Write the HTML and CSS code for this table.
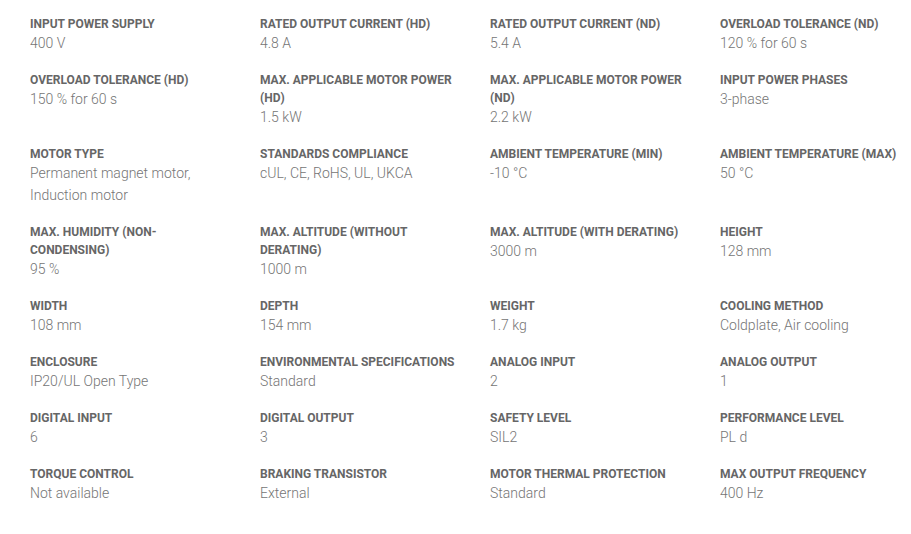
FILE: index.html
```html
<!DOCTYPE html>
<html lang="en">
<head>
<meta charset="utf-8">
<title>Specifications</title>
<link rel="stylesheet" href="styles.css">
</head>
<body>
<dl class="specs">
  <div class="spec"><dt>Input power supply</dt><dd>400 V</dd></div>
  <div class="spec"><dt>Rated output current (HD)</dt><dd>4.8 A</dd></div>
  <div class="spec"><dt>Rated output current (ND)</dt><dd>5.4 A</dd></div>
  <div class="spec"><dt>Overload tolerance (ND)</dt><dd>120 % for 60 s</dd></div>

  <div class="spec"><dt>Overload tolerance (HD)</dt><dd>150 % for 60 s</dd></div>
  <div class="spec"><dt>Max. applicable motor power (HD)</dt><dd>1.5 kW</dd></div>
  <div class="spec"><dt>Max. applicable motor power (ND)</dt><dd>2.2 kW</dd></div>
  <div class="spec"><dt>Input power phases</dt><dd>3-phase</dd></div>

  <div class="spec"><dt>Motor type</dt><dd>Permanent magnet motor, Induction motor</dd></div>
  <div class="spec"><dt>Standards compliance</dt><dd>cUL, CE, RoHS, UL, UKCA</dd></div>
  <div class="spec"><dt>Ambient temperature (min)</dt><dd>-10 °C</dd></div>
  <div class="spec"><dt>Ambient temperature (max)</dt><dd>50 °C</dd></div>

  <div class="spec"><dt>Max. humidity (non-condensing)</dt><dd>95 %</dd></div>
  <div class="spec"><dt>Max. altitude (without derating)</dt><dd>1000 m</dd></div>
  <div class="spec"><dt>Max. altitude (with derating)</dt><dd>3000 m</dd></div>
  <div class="spec"><dt>Height</dt><dd>128 mm</dd></div>

  <div class="spec"><dt>Width</dt><dd>108 mm</dd></div>
  <div class="spec"><dt>Depth</dt><dd>154 mm</dd></div>
  <div class="spec"><dt>Weight</dt><dd>1.7 kg</dd></div>
  <div class="spec"><dt>Cooling method</dt><dd>Coldplate, Air cooling</dd></div>

  <div class="spec"><dt>Enclosure</dt><dd>IP20/UL Open Type</dd></div>
  <div class="spec"><dt>Environmental specifications</dt><dd>Standard</dd></div>
  <div class="spec"><dt>Analog input</dt><dd>2</dd></div>
  <div class="spec"><dt>Analog output</dt><dd>1</dd></div>

  <div class="spec"><dt>Digital input</dt><dd>6</dd></div>
  <div class="spec"><dt>Digital output</dt><dd>3</dd></div>
  <div class="spec"><dt>Safety level</dt><dd>SIL2</dd></div>
  <div class="spec"><dt>Performance level</dt><dd>PL d</dd></div>

  <div class="spec"><dt>Torque control</dt><dd>Not available</dd></div>
  <div class="spec"><dt>Braking transistor</dt><dd>External</dd></div>
  <div class="spec"><dt>Motor thermal protection</dt><dd>Standard</dd></div>
  <div class="spec"><dt>Max output frequency</dt><dd>400 Hz</dd></div>
</dl>
</body>
</html>
```

FILE: styles.css
```css
html, body {
  margin: 0;
  padding: 0;
  background: #ffffff;
}

body {
  font-family: Roboto, "Liberation Sans", Arial, sans-serif;
}

.specs {
  margin: 0;
  padding: 15px 0 0 30px;
  display: grid;
  grid-template-columns: 200px 200px 200px 1fr;
  column-gap: 30px;
  row-gap: 17px;
}

.spec {
  margin: 0;
}

.spec dt {
  font-size: 12px;
  line-height: 18px;
  font-weight: 700;
  text-transform: uppercase;
  color: #666666;
}

.spec dd {
  margin: -1px 0 0;
  font-size: 14px;
  line-height: 22px;
  font-weight: 300;
  color: #757575;
}
```
